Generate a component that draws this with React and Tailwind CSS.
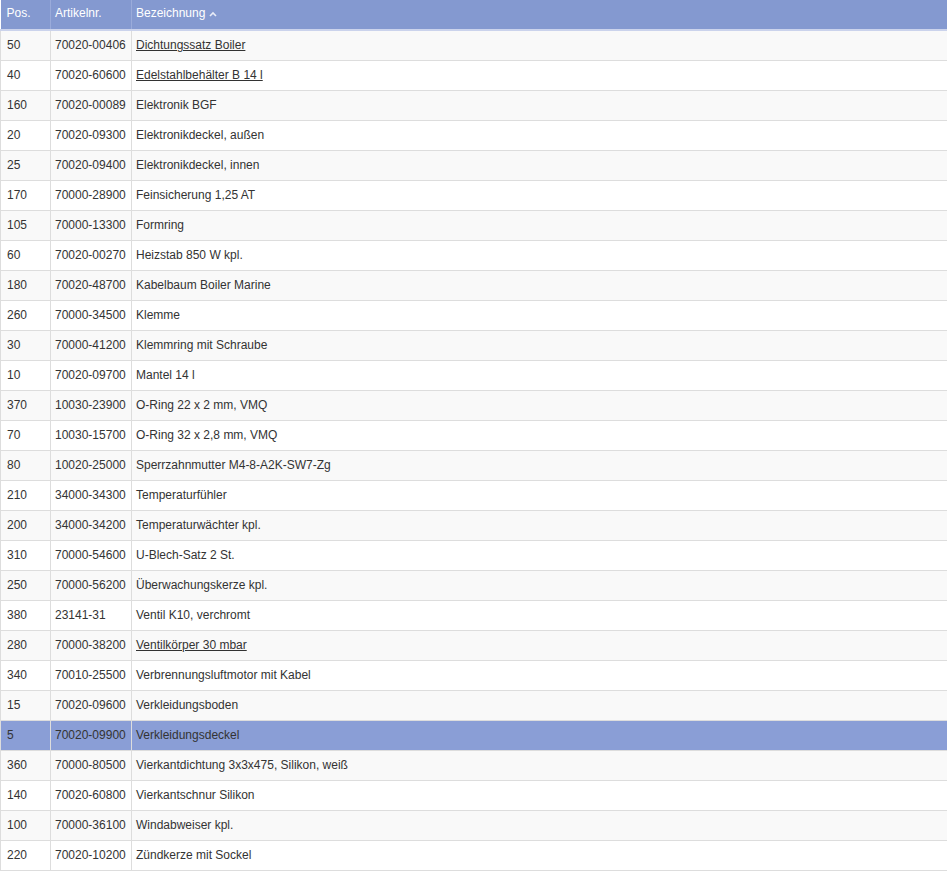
const rows = [
  ["50", "70020-00406", "Dichtungssatz Boiler", true],
  ["40", "70020-60600", "Edelstahlbehälter B 14 l", true],
  ["160", "70020-00089", "Elektronik BGF"],
  ["20", "70020-09300", "Elektronikdeckel, außen"],
  ["25", "70020-09400", "Elektronikdeckel, innen"],
  ["170", "70000-28900", "Feinsicherung 1,25 AT"],
  ["105", "70000-13300", "Formring"],
  ["60", "70020-00270", "Heizstab 850 W kpl."],
  ["180", "70020-48700", "Kabelbaum Boiler Marine"],
  ["260", "70000-34500", "Klemme"],
  ["30", "70000-41200", "Klemmring mit Schraube"],
  ["10", "70020-09700", "Mantel 14 l"],
  ["370", "10030-23900", "O-Ring 22 x 2 mm, VMQ"],
  ["70", "10030-15700", "O-Ring 32 x 2,8 mm, VMQ"],
  ["80", "10020-25000", "Sperrzahnmutter M4-8-A2K-SW7-Zg"],
  ["210", "34000-34300", "Temperaturfühler"],
  ["200", "34000-34200", "Temperaturwächter kpl."],
  ["310", "70000-54600", "U-Blech-Satz 2 St."],
  ["250", "70000-56200", "Überwachungskerze kpl."],
  ["380", "23141-31", "Ventil K10, verchromt"],
  ["280", "70000-38200", "Ventilkörper 30 mbar", true],
  ["340", "70010-25500", "Verbrennungsluftmotor mit Kabel"],
  ["15", "70020-09600", "Verkleidungsboden"],
  ["5", "70020-09900", "Verkleidungsdeckel"],
  ["360", "70000-80500", "Vierkantdichtung 3x3x475, Silikon, weiß"],
  ["140", "70020-60800", "Vierkantschnur Silikon"],
  ["100", "70000-36100", "Windabweiser kpl."],
  ["220", "70020-10200", "Zündkerze mit Sockel"],
];

const SortUp = () => (
  <svg width="8" height="6" viewBox="0 0 8 6" className="ml-1 inline-block align-middle">
    <path d="M1 5 L4 2 L7 5" fill="none" stroke="#e8ecf7" strokeWidth="1.6" />
  </svg>
);

export default function App() {
  return (
    <div className="w-[947px] h-[872px] bg-white overflow-hidden font-['Liberation_Sans',Arial,sans-serif] text-[12px] text-[#333]">
      <table className="w-full table-fixed border-collapse">
        <colgroup>
          <col className="w-[50px]" />
          <col className="w-[81px]" />
          <col />
        </colgroup>
        <thead>
          <tr className="h-[30px] bg-[#8499d0] text-white text-left border-b-2 border-[#cbd3ec]">
            <th className="font-normal pl-[6px] pb-[3px] border-r border-[#9aabda]">Pos.</th>
            <th className="font-normal pl-[4px] pb-[3px] border-r border-[#9aabda]">Artikelnr.</th>
            <th className="font-normal pl-[4px] pb-[3px]">
              Bezeichnung
              <SortUp />
            </th>
          </tr>
        </thead>
        <tbody>
          {rows.map(([pos, art, name, link], i) => {
            const selected = pos === "5";
            const bg = selected ? "bg-[#8a9ed6]" : i % 2 === 0 ? "bg-[#f9f9f9]" : "bg-white";
            return (
              <tr key={i} className={`h-[30px] border-b border-[#dddddd] ${bg}`}>
                <td className="pl-[6px] border-l border-r border-[#dddddd]">{pos}</td>
                <td className="pl-[4px] border-r border-[#dddddd]">{art}</td>
                <td className="pl-[4px]">
                  {link ? <span className="underline">{name}</span> : name}
                </td>
              </tr>
            );
          })}
        </tbody>
      </table>
    </div>
  );
}
